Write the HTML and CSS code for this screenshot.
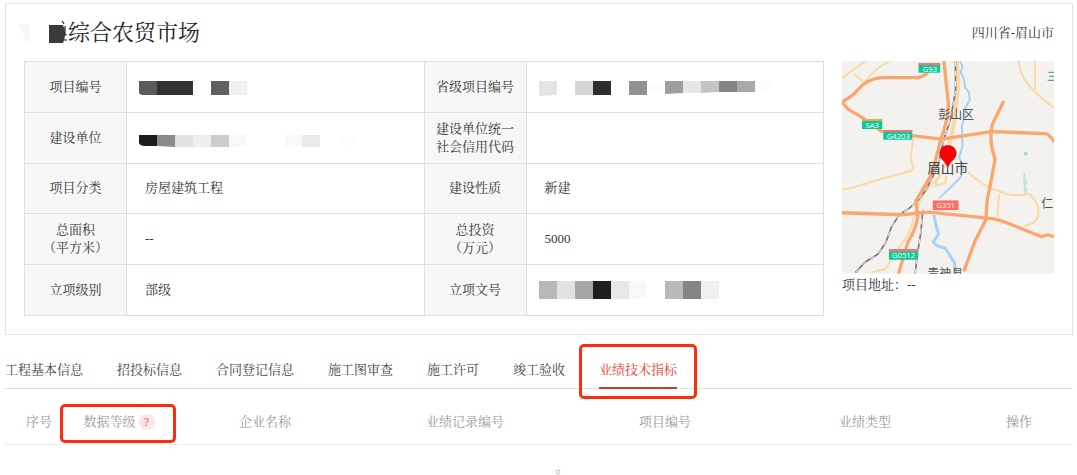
FILE: index.html
```html
<!DOCTYPE html>
<html lang="zh-CN">
<head>
<meta charset="utf-8">
<title>综合农贸市场</title>
<link rel="stylesheet" href="styles.css">
</head>
<body>
<main class="page">
  <section class="card">
    <header class="card-head">
      <h1 class="title">
        <svg class="title-mask" width="50" height="24" viewBox="0 0 50 24" aria-hidden="true">
          <path d="M0 3h12v17H7Q5 9 0 3z" fill="#f7f7f7"/>
          <path d="M31 4h14q2 4 2 9t-2 9H31z" fill="#3a3a3a"/>
          <path d="M44 0l2 3M47 5v9M46 14h3M46 19h3" stroke="#222" stroke-width="1.2"/>
        </svg>综合农贸市场</h1>
      <span class="region">四川省-眉山市</span>
    </header>
    <div class="card-body">
      <table class="info">
        <colgroup><col class="col-label"><col><col class="col-label"><col></colgroup>
        <tr>
          <th scope="row">项目编号</th>
          <td class="masked"><svg width="220" height="18" viewBox="0 0 220 18" aria-hidden="true">
            <path d="M0 3h18v14H5Q1 17 0 15z" fill="#5a5a5a"/><path d="M18 3h36v14H18z" fill="#333"/><path d="M72 3h18v14H72z" fill="#606060"/><path d="M90 3h18v14H90z" fill="#f0f0f0"/></svg></td>
          <th scope="row">省级项目编号</th>
          <td class="masked"><svg width="240" height="18" viewBox="0 0 240 18" aria-hidden="true">
            <path d="M0 3h18v14L0 18z" fill="#e4e4e4"/><path d="M36 3h18v14H36z" fill="#d6d6d6"/><path d="M54 3h18v14H54z" fill="#2e2e2e"/><path d="M90 3h18v14H90z" fill="#929292"/><path d="M108 4h18v11H108z" fill="#fcfcfc"/><path d="M126 3h18v12l-18 1z" fill="#9e9e9e"/><path d="M144 3h18v12H144z" fill="#e6e6e6"/><path d="M162 3h18v11l-18 1z" fill="#c4c4c4"/><path d="M180 3h18v11H180z" fill="#848484"/><path d="M198 3h18v11H198z" fill="#a9a9a9"/><path d="M216 3h18q2 6-4 8l-14 3z" fill="#fbfbfb"/></svg></td>
        </tr>
        <tr>
          <th scope="row">建设单位</th>
          <td class="masked"><svg width="220" height="18" viewBox="0 0 220 18" aria-hidden="true">
            <path d="M0 6h18v11H6Q1 17 0 14z" fill="#1c1c1c"/><path d="M18 6h18v12l-18-1z" fill="#8a8a8a"/><path d="M36 6h18v12H36z" fill="#e1e1e1"/><path d="M54 6h18v12H54z" fill="#eee"/><path d="M72 6h18v12H72z" fill="#ccc"/><path d="M90 6h18v12H90z" fill="#f8f8f8"/><path d="M146 6h17v12H146z" fill="#f9f9f9"/><path d="M163 6h18v12H163z" fill="#eaeaea"/><path d="M200 7h18v9H200z" fill="#fdfdfd"/></svg></td>
          <th scope="row">建设单位统一<br>社会信用代码</th>
          <td></td>
        </tr>
        <tr>
          <th scope="row">项目分类</th><td>房屋建筑工程</td>
          <th scope="row">建设性质</th><td>新建</td>
        </tr>
        <tr>
          <th scope="row">总面积<br>（平方米）</th><td>--</td>
          <th scope="row">总投资<br>（万元）</th><td>5000</td>
        </tr>
        <tr>
          <th scope="row">立项级别</th><td>部级</td>
          <th scope="row">立项文号</th>
          <td class="masked"><svg width="182" height="18" viewBox="0 0 182 18" aria-hidden="true">
            <path d="M0 0h18v18H0z" fill="#b8b8b8"/><path d="M18 0h18v18H18z" fill="#e1e1e1"/><path d="M36 0h18v18H36z" fill="#a6a6a6"/><path d="M54 0h18v18H54z" fill="#1f1f1f"/><path d="M72 0h18v18H72z" fill="#e8e8e8"/><path d="M90 0h18v18H90z" fill="#f8f8f8"/><path d="M126 0h18v18H126z" fill="#bababa"/><path d="M144 0h18v18H144z" fill="#848484"/><path d="M162 0h18v18H162z" fill="#f0f0f0"/></svg></td>
        </tr>
      </table>
      <aside class="location">
        <svg class="map" viewBox="0 0 637 639" role="img" aria-label="眉山市地图">
          <rect width="637" height="639" fill="#f3f2ee"/>
          <g fill="none" stroke="#fbd9a4" stroke-width="6">
            <path d="M0 52L70 0M38 40l32 28M62 72Q92 28 142 0"/>
            <path d="M530 0Q540 60 578 90Q610 122 637 140M580 0v88"/>
            <path d="M214 235L206 290Q218 320 208 330L100 360L60 372L28 382L0 386"/>
            <path d="M378 334Q430 380 470 390Q520 412 560 398Q600 430 588 470Q580 490 548 496M472 400l-5 68"/>
            <path d="M343 0L352 60L340 150L328 240L300 340L252 390L226 440L200 520L172 560L130 625L90 635"/>
            <path d="M290 345l-10 30 30-8 4-22"/>
          </g>
          <path d="M343 0Q352 40 348 90L336 190L322 250" fill="none" stroke="#fbd9a4" stroke-width="12"/>
          <g fill="none" stroke="#a8d1fa" stroke-width="6" stroke-linejoin="round">
            <path d="M354 2l8 12-5 20 10 22 2 22 12 16 3 24-12 20-4 30-8 28 2 60-10 34 14 28-10 32-24 24-40 38"/>
            <path stroke-width="9" d="M276 462l6 30 8 28-16 24 14 12 22 6 28 44 4 35"/>
          </g>
          <g fill="none" stroke="#777" stroke-width="5">
            <path d="M341 0v90L325 180L306 235L292 300L272 350L250 390L228 420L200 444L172 462L148 500L132 545L108 580L70 604L40 636"/>
            <path d="M243 445l-6 70-12 75-5 49"/>
          </g>
          <g fill="none" stroke="#f3f2ee" stroke-width="3" stroke-dasharray="16 14">
            <path d="M341 0v90L325 180L306 235L292 300L272 350L250 390L228 420L200 444L172 462L148 500L132 545L108 580L70 604L40 636"/>
            <path d="M243 445l-6 70-12 75-5 49"/>
          </g>
          <g fill="none" stroke="#fba66e" stroke-width="10" stroke-linejoin="round">
            <path d="M0 124L35 100L62 72Q90 50 125 50H225Q245 48 258 34"/>
            <path d="M0 124L20 146L58 168L122 214"/>
            <path d="M210 224L298 235L448 212L612 218Q628 224 637 244"/>
            <path d="M486 120L452 190Q444 220 450 260L460 295L450 350L436 420L432 478L400 540L366 632"/>
            <path d="M306 0L320 130Q318 180 298 232L278 310L264 350L222 420L228 468Q220 510 198 544L170 639"/>
            <path d="M0 456L180 462L260 454L438 472Q470 474 520 496L600 528L618 522L637 528"/>
          </g>
          <g fill="#9fddc5"><circle cx="552" cy="279" r="6"/><path d="M546 334l6 6-2 10 8 12-6 14 6 12-8 10-6-6 4-10-4-20z" opacity=".6"/></g>
          <g class="shields">
            <path d="M230 6h65v29h-65zM60 174h61v30H60zM124 207h87v30h-87zM141 566h87v31h-87z" fill="#10c79b"/>
            <path d="M230 6h65v7h-65zM124 207h87v7h-87zM141 566h87v7h-87z" fill="#e77872"/>
            <path d="M60 174h61v6H60z" fill="#e2b34a"/>
            <rect x="273" y="419" width="77" height="29" fill="#ff6c63"/>
            <text x="264" y="32">G93</text><text x="91" y="200">SA3</text><text x="169" y="234">G4203</text><text x="185" y="593">G0512</text><text x="312" y="442">G351</text>
          </g>
          <g class="places">
            <text x="289" y="175" font-size="36">彭山区</text>
            <text x="256" y="338" font-size="41" class="city">眉山市</text>
            <text x="599" y="442" font-size="36">仁</text>
            <text x="256" y="653" font-size="36">青神县</text>
            <path d="M620 34h17M623 46h14M618 58h19" stroke="#3f8f7a" stroke-width="3"/>
          </g>
          <path d="M318 318Q310 304 300 294Q292 284 294 274Q298 254 318 254Q339 254 343 274Q344 286 335 295Q324 305 318 318z" fill="#fa0008" stroke="#c8000a" stroke-width="2"/>
        </svg>
        <p class="address">项目地址：--</p>
      </aside>
    </div>
  </section>

  <nav class="tabs">
    <a class="tab" href="#base">工程基本信息</a>
    <a class="tab" href="#bid">招投标信息</a>
    <a class="tab" href="#contract">合同登记信息</a>
    <a class="tab" href="#drawing">施工图审查</a>
    <a class="tab" href="#permit">施工许可</a>
    <a class="tab" href="#finish">竣工验收</a>
    <a class="tab active" href="#index" aria-current="page">业绩技术指标</a>
  </nav>

  <table class="records">
    <colgroup><col class="col-no"><col class="col-level"><col><col><col><col><col class="col-action"></colgroup>
    <thead>
      <tr>
        <th scope="col">序号</th>
        <th scope="col"><span class="level">数据等级<button class="help" type="button" aria-label="数据等级说明">?</button></span></th>
        <th scope="col">企业名称</th>
        <th scope="col">业绩记录编号</th>
        <th scope="col">项目编号</th>
        <th scope="col">业绩类型</th>
        <th scope="col">操作</th>
      </tr>
    </thead>
  </table>
  <div class="empty">
    <svg width="8" height="6" viewBox="0 0 8 6" aria-hidden="true"><circle cx="4" cy="3" r="2" fill="none" stroke="#bbb"/></svg>
  </div>
</main>
</body>
</html>
```
FILE: styles.css
```css
* {
  box-sizing: border-box;
}

body {
  margin: 0;
  background: #fff;
  color: #333;
  font: 13px/18px "Liberation Serif", "Noto Serif CJK SC", "Noto Sans CJK SC", serif;
}

.page {
  padding: 3px 4px 0 5px;
}

.card {
  padding: 0 18px 18px;
  border: 1px solid #e2e2e2;
}

.card-head {
  display: flex;
  align-items: center;
  justify-content: space-between;
  height: 57px;
}

.title {
  display: flex;
  align-items: center;
  margin: 0 0 0 -6px;
  color: #222;
  font-size: 22px;
  font-weight: 400;
  line-height: 30px;
}

.title-mask {
  overflow: visible;
}

.card-body {
  display: grid;
  grid-template-columns: 1fr 212px;
  align-items: start;
  gap: 18px;
}

.info {
  width: 100%;
  height: 255px;
  border-collapse: collapse;
  table-layout: fixed;
}

.col-label {
  width: 102px;
}

.info th,
.info td {
  height: 50px;
  padding: 0;
  border: 1px solid #dedede;
  font-weight: 400;
}

.info th {
  background: #f7f7f7;
  text-align: center;
}

.info td {
  padding-left: 18px;
}

.info .masked {
  padding-left: 12px;
}

.info svg {
  display: block;
}

.map {
  display: block;
  width: 100%;
}

.shields text {
  fill: #fff;
  font-family: "Open Sans", sans-serif;
  font-size: 23px;
  text-anchor: middle;
}

.places text {
  fill: #555;
  font-family: "Noto Sans CJK SC", sans-serif;
}

.places .city {
  fill: #444;
}

.address {
  margin: 0;
  line-height: 22px;
}

.tabs {
  display: flex;
  gap: 34px;
  margin-top: 17px;
  border-bottom: 1px solid #dcdfdf;
}

.tab {
  position: relative;
  color: #444;
  line-height: 36px;
  text-decoration: none;
  white-space: nowrap;
}

.tab.active {
  margin-bottom: -1px;
  border-bottom: 2px solid #d33a2c;
  color: #e8392c;
  line-height: 35px;
}

.tab.active::after {
  position: absolute;
  inset: -8px -20px -12px;
  border: 3px solid #fc2c0c;
  border-radius: 5px;
  content: "";
}

.records {
  width: 100%;
  border-collapse: collapse;
  table-layout: fixed;
}

.records th {
  height: 55px;
  padding: 12px 0 0;
  border-bottom: 1px solid #ececec;
  color: #999;
  font-weight: 400;
  text-align: center;
  white-space: nowrap;
}

.col-no {
  width: 68px;
}

.col-level {
  width: 92px;
}

.col-action {
  width: 108px;
}

.level {
  position: relative;
  display: inline-flex;
  align-items: center;
  gap: 3px;
}

.level::after {
  position: absolute;
  inset: -9px -21px -12px -23px;
  border: 3px solid #fc2c0c;
  border-radius: 5px;
  content: "";
  pointer-events: none;
}

.help {
  width: 16px;
  height: 16px;
  padding: 0;
  border: 0;
  border-radius: 50%;
  background: #fde6e4;
  color: #ee4a42;
  font: 12px/16px "Liberation Serif", serif;
}

.empty {
  display: flex;
  justify-content: center;
  padding: 24px 0 0 38px;
}
```
